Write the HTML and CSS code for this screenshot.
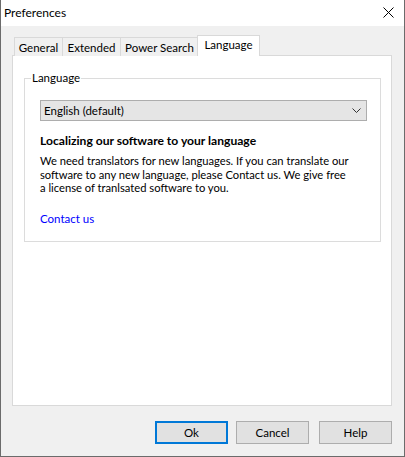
FILE: index.html
```html
<!DOCTYPE html>
<html>
<head>
<meta charset="utf-8">
<title>Preferences</title>
<link rel="stylesheet" href="styles.css">
</head>
<body>
<div class="window">
  <div class="titlebar">
    <span class="title">Preferences</span>
    <svg class="close" width="11" height="11" viewBox="0 0 11 11"><path d="M0.5 0.5 L10.5 10.5 M10.5 0.5 L0.5 10.5" stroke="#000" stroke-width="1" fill="none"/></svg>
  </div>
  <div class="content">
    <div class="tabs">
      <div class="tab t-general">General</div>
      <div class="tab t-extended">Extended</div>
      <div class="tab t-power">Power Search</div>
      <div class="tab active t-lang">Language</div>
    </div>
    <div class="panel">
      <div class="group">
        <span class="legend">Language</span>
        <div class="combo">
          <span>English (default)</span>
          <svg class="chev" width="9" height="5" viewBox="0 0 9 5"><path d="M0.5 0.5 L4.5 4.5 L8.5 0.5" stroke="#333" stroke-width="1" fill="none"/></svg>
        </div>
        <div class="heading">Localizing our software to your language</div>
        <p class="para">We need translators for new languages. If you can translate our<br>software to any new language, please Contact us. We give free<br>a license of tranlsated software to you.</p>
        <a class="link" href="#">Contact us</a>
      </div>
    </div>
    <div class="buttons">
      <div class="btn default">Ok</div>
      <div class="btn b-cancel">Cancel</div>
      <div class="btn b-help">Help</div>
    </div>
  </div>
</div>
</body>
</html>
```
FILE: styles.css
```css
html, body {
  margin: 0;
  padding: 0;
}
body {
  font-family: Lato, "Noto Sans", sans-serif;
  font-size: 11.2px;
  color: #000;
  background: #f0f0f0;
}
.window {
  width: 405px;
  height: 457px;
  box-sizing: border-box;
  border: 1px solid #6b6b6b;
  border-top: none;
  background: #f0f0f0;
  display: flex;
  flex-direction: column;
}
.titlebar {
  height: 26px;
  background: #fff;
  display: flex;
  align-items: center;
  justify-content: space-between;
  padding: 0 10px 1px 3px;
  box-sizing: border-box;
}
.title {
  font-size: 12px;
}
.close {
  display: block;
  margin-top: -1px;
}
.content {
  flex: 1;
  display: flex;
  flex-direction: column;
  padding: 10px 12px 12px 11px;
}
.tabs {
  display: flex;
  align-items: flex-end;
  height: 20px;
  padding-left: 2px;
  margin-bottom: -1px;
  position: relative;
  z-index: 1;
}
.tab {
  height: 19px;
  box-sizing: border-box;
  border: 1px solid #d9d9d9;
  border-bottom: none;
  border-right: none;
  background: #f0f0f0;
  display: flex;
  align-items: center;
  justify-content: center;
  line-height: 1;
  padding-top: 1px;
  white-space: nowrap;
  font-size: 11.5px;
}
.t-general { width: 48px; }
.t-extended { width: 58px; }
.t-power { width: 79px; border-right: 1px solid #d9d9d9; }
.t-lang { width: 63px; }
.tab.active {
  height: 21px;
  background: #fff;
  border: 1px solid #d9d9d9;
  border-bottom: none;
  margin-left: -2px;
  padding-bottom: 3px;
}
.panel {
  flex: 1;
  background: #fff;
  border: 1px solid #d9d9d9;
  padding: 22px 10px 0 11px;
}
.group {
  position: relative;
  border: 1px solid #dcdcdc;
  height: 164px;
  box-sizing: border-box;
  padding: 21px 13px 0 15px;
}
.legend {
  position: absolute;
  top: -9px;
  left: 6px;
  background: #fff;
  padding: 0 1px;
  line-height: 16px;
  font-size: 11.5px;
}
.combo {
  height: 21px;
  box-sizing: border-box;
  background: #e5e5e5;
  border: 1px solid #adadad;
  display: flex;
  align-items: center;
  justify-content: space-between;
  padding: 0 4px 1px 3px;
  font-size: 11.5px;
}
.chev {
  display: block;
  margin-right: 1px;
  margin-top: 1px;
}
.heading {
  font-weight: bold;
  font-size: 12.1px;
  line-height: 16px;
  margin-top: 12px;
}
.para {
  margin: 5px 0 0 0;
  line-height: 13.5px;
  white-space: nowrap;
}
.link {
  display: inline-block;
  color: #0000ff;
  text-decoration: none;
  margin-top: 16px;
  line-height: 16px;
  font-size: 11.5px;
}
.buttons {
  display: flex;
  justify-content: flex-end;
  margin-top: 15px;
}
.btn {
  width: 73px;
  height: 23px;
  box-sizing: border-box;
  background: #e1e1e1;
  border: 1px solid #adadad;
  display: flex;
  align-items: center;
  justify-content: center;
  font-size: 11.5px;
}
.b-cancel { margin-left: 8px; }
.b-help { margin-left: 10px; }
.btn.default {
  border: 2px solid #0078d7;
}
```
